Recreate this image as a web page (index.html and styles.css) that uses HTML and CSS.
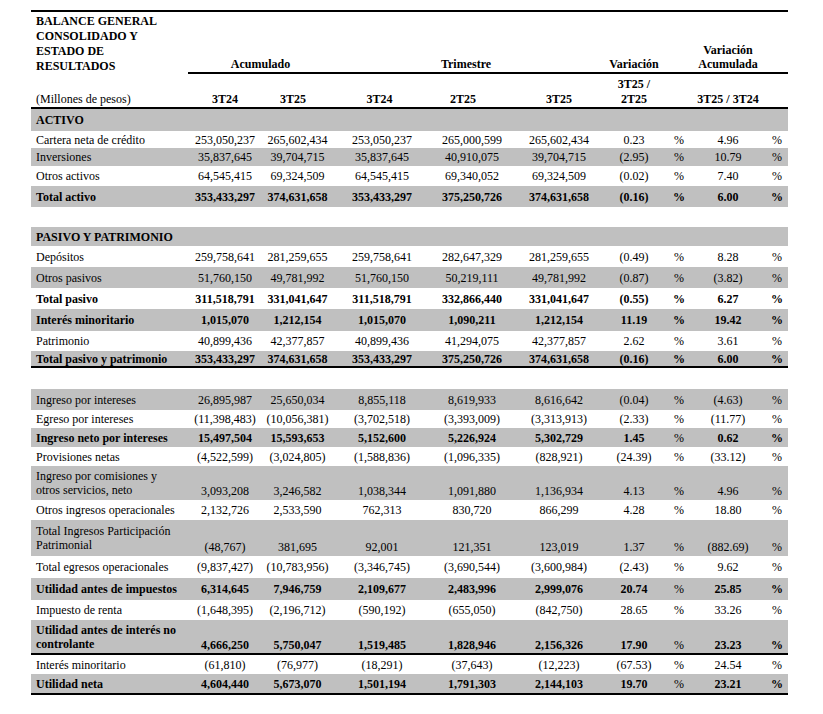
FILE: index.html
```html
<!DOCTYPE html>
<html lang="es">
<head>
<meta charset="utf-8">
<title>Balance General Consolidado y Estado de Resultados</title>
<link rel="stylesheet" href="styles.css">
</head>
<body>
<div class="wrap">
<table class="fin">
<colgroup>
<col class="c-lbl"><col class="c-1"><col class="c-2"><col class="c-3"><col class="c-4"><col class="c-5"><col class="c-6"><col class="c-p1"><col class="c-8"><col class="c-p2">
</colgroup>
<tr class="hd1">
<td class="lbl">BALANCE GENERAL<br>CONSOLIDADO Y<br>ESTADO DE<br>RESULTADOS</td>
<td class="ul" colspan="2">Acumulado</td>
<td class="ul sh6" colspan="3">Trimestre</td>
<td class="ul">Variación</td>
<td class="ul"></td>
<td class="ul va">Variación<br>Acumulada</td>
<td class="ul"></td>
</tr>
<tr class="hd2">
<td class="lbl nb">(Millones de pesos)</td>
<td>3T24</td>
<td class="sh9">3T25</td>
<td class="sh5">3T24</td>
<td class="sh18">2T25</td>
<td>3T25</td>
<td>3T25 /<br>2T25</td>
<td></td>
<td>3T25 / 3T24</td>
<td></td>
</tr>

<tr class="g b h22"><td class="lbl" colspan="10">ACTIVO</td></tr>
<tr class="h17"><td class="lbl">Cartera neta de crédito</td><td>253,050,237</td><td>265,602,434</td><td>253,050,237</td><td>265,000,599</td><td>265,602,434</td><td>0.23</td><td>%</td><td>4.96</td><td class="pc">%</td></tr>
<tr class="g h18"><td class="lbl">Inversiones</td><td>35,837,645</td><td>39,704,715</td><td>35,837,645</td><td>40,910,075</td><td>39,704,715</td><td>(2.95)</td><td>%</td><td>10.79</td><td class="pc">%</td></tr>
<tr class="h20"><td class="lbl">Otros activos</td><td>64,545,415</td><td>69,324,509</td><td>64,545,415</td><td>69,340,052</td><td>69,324,509</td><td>(0.02)</td><td>%</td><td>7.40</td><td class="pc">%</td></tr>
<tr class="g b h21"><td class="lbl">Total activo</td><td>353,433,297</td><td>374,631,658</td><td>353,433,297</td><td>375,250,726</td><td>374,631,658</td><td>(0.16)</td><td>%</td><td>6.00</td><td class="pc">%</td></tr>
<tr class="h20"><td colspan="10"></td></tr>

<tr class="g b h19"><td class="lbl" colspan="10">PASIVO Y PATRIMONIO</td></tr>
<tr class="h21"><td class="lbl">Depósitos</td><td>259,758,641</td><td>281,259,655</td><td>259,758,641</td><td>282,647,329</td><td>281,259,655</td><td>(0.49)</td><td>%</td><td>8.28</td><td class="pc">%</td></tr>
<tr class="g h21"><td class="lbl">Otros pasivos</td><td>51,760,150</td><td>49,781,992</td><td>51,760,150</td><td>50,219,111</td><td>49,781,992</td><td>(0.87)</td><td>%</td><td>(3.82)</td><td class="pc">%</td></tr>
<tr class="b h21"><td class="lbl">Total pasivo</td><td>311,518,791</td><td>331,041,647</td><td>311,518,791</td><td>332,866,440</td><td>331,041,647</td><td>(0.55)</td><td>%</td><td>6.27</td><td class="pc">%</td></tr>
<tr class="g b h22"><td class="lbl">Interés minoritario</td><td>1,015,070</td><td>1,212,154</td><td>1,015,070</td><td>1,090,211</td><td>1,212,154</td><td>11.19</td><td>%</td><td>19.42</td><td class="pc">%</td></tr>
<tr class="h20"><td class="lbl">Patrimonio</td><td>40,899,436</td><td>42,377,857</td><td>40,899,436</td><td>41,294,075</td><td>42,377,857</td><td>2.62</td><td>%</td><td>3.61</td><td class="pc">%</td></tr>
<tr class="g b h17 rule"><td class="lbl">Total pasivo y patrimonio</td><td>353,433,297</td><td>374,631,658</td><td>353,433,297</td><td>375,250,726</td><td>374,631,658</td><td>(0.16)</td><td>%</td><td>6.00</td><td class="pc">%</td></tr>
<tr class="h21"><td colspan="10"></td></tr>

<tr class="g h21"><td class="lbl">Ingreso por intereses</td><td>26,895,987</td><td>25,650,034</td><td>8,855,118</td><td>8,619,933</td><td>8,616,642</td><td>(0.04)</td><td>%</td><td>(4.63)</td><td class="pc">%</td></tr>
<tr class="h18"><td class="lbl">Egreso por intereses</td><td>(11,398,483)</td><td>(10,056,381)</td><td>(3,702,518)</td><td>(3,393,009)</td><td>(3,313,913)</td><td>(2.33)</td><td>%</td><td>(11.77)</td><td class="pc">%</td></tr>
<tr class="g b h19"><td class="lbl">Ingreso neto por intereses</td><td>15,497,504</td><td>15,593,653</td><td>5,152,600</td><td>5,226,924</td><td>5,302,729</td><td>1.45</td><td class="n">%</td><td>0.62</td><td class="pc">%</td></tr>
<tr class="h19"><td class="lbl">Provisiones netas</td><td>(4,522,599)</td><td>(3,024,805)</td><td>(1,588,836)</td><td>(1,096,335)</td><td>(828,921)</td><td>(24.39)</td><td>%</td><td>(33.12)</td><td class="pc">%</td></tr>
<tr class="g ml h34"><td class="lbl">Ingreso por comisiones y<br>otros servicios, neto</td><td>3,093,208</td><td>3,246,582</td><td>1,038,344</td><td>1,091,880</td><td>1,136,934</td><td>4.13</td><td>%</td><td>4.96</td><td class="pc">%</td></tr>
<tr class="h20"><td class="lbl">Otros ingresos operacionales</td><td>2,132,726</td><td>2,533,590</td><td>762,313</td><td>830,720</td><td>866,299</td><td>4.28</td><td>%</td><td>18.80</td><td class="pc">%</td></tr>
<tr class="g ml h36"><td class="lbl">Total Ingresos Participación<br>Patrimonial</td><td>(48,767)</td><td>381,695</td><td>92,001</td><td>121,351</td><td>123,019</td><td>1.37</td><td>%</td><td>(882.69)</td><td class="pc">%</td></tr>
<tr class="h22"><td class="lbl">Total egresos operacionales</td><td>(9,837,427)</td><td>(10,783,956)</td><td>(3,346,745)</td><td>(3,690,544)</td><td>(3,600,984)</td><td>(2.43)</td><td>%</td><td>9.62</td><td class="pc">%</td></tr>
<tr class="g b h22"><td class="lbl">Utilidad antes de impuestos</td><td>6,314,645</td><td>7,946,759</td><td>2,109,677</td><td>2,483,996</td><td>2,999,076</td><td>20.74</td><td class="n">%</td><td>25.85</td><td class="pc">%</td></tr>
<tr class="h20"><td class="lbl">Impuesto de renta</td><td>(1,648,395)</td><td>(2,196,712)</td><td>(590,192)</td><td>(655,050)</td><td>(842,750)</td><td>28.65</td><td>%</td><td>33.26</td><td class="pc">%</td></tr>
<tr class="g b ml h35 rule"><td class="lbl">Utilidad antes de interés no<br>controlante</td><td>4,666,250</td><td>5,750,047</td><td>1,519,485</td><td>1,828,946</td><td>2,156,326</td><td>17.90</td><td class="n">%</td><td>23.23</td><td class="pc">%</td></tr>
<tr class="h19"><td class="lbl">Interés minoritario</td><td>(61,810)</td><td>(76,977)</td><td>(18,291)</td><td>(37,643)</td><td>(12,223)</td><td>(67.53)</td><td>%</td><td>24.54</td><td class="pc">%</td></tr>
<tr class="g b h21 rule"><td class="lbl">Utilidad neta</td><td>4,604,440</td><td>5,673,070</td><td>1,501,194</td><td>1,791,303</td><td>2,144,103</td><td>19.70</td><td class="n">%</td><td>23.21</td><td class="pc">%</td></tr>
</table>
</div>
</body>
</html>
```

FILE: styles.css
```css
html, body {
  margin: 0;
  padding: 0;
  background: #ffffff;
}

body {
  font-family: "Liberation Serif", "Times New Roman", serif;
  font-size: 12px;
  color: #000000;
}

.wrap {
  padding: 10px 0 0 31px;
}

.fin {
  border-collapse: separate;
  border-spacing: 0;
  table-layout: fixed;
  width: 757px;
  border-top: 2px solid #000;
}

.c-lbl { width: 157px; }
.c-1 { width: 74px; }
.c-2 { width: 71px; }
.c-3 { width: 98px; }
.c-4 { width: 82px; }
.c-5 { width: 92px; }
.c-6 { width: 58px; }
.c-p1 { width: 32px; }
.c-8 { width: 66px; }
.c-p2 { width: 27px; }

.fin td {
  padding: 0;
  text-align: center;
  vertical-align: middle;
  line-height: 14px;
  white-space: nowrap;
}

.fin td.lbl {
  text-align: left;
  padding-left: 5px;
}

.fin td.pc {
  padding-left: 5px;
}

/* header */
.hd1 { height: 62px; }
.hd1 td {
  font-weight: bold;
  vertical-align: bottom;
  line-height: 15px;
}
.hd1 td.ul {
  border-bottom: 2px solid #000;
}
.hd1 td.va {
  line-height: 14px;
  padding-bottom: 1px;
}
.hd1 td.sh6 { padding-right: 6px; }

.hd2 { height: 35px; }
.hd2 td {
  font-weight: bold;
  vertical-align: bottom;
  line-height: 15px;
  border-bottom: 2px solid #000;
}
.hd2 td.nb { font-weight: normal; }
.hd2 td.sh9 { padding-right: 9px; }
.hd2 td.sh5 { padding-right: 5px; }
.hd2 td.sh18 { padding-right: 18px; }

/* body rows */
.g td { background: #c0c0c0; }
.b td { font-weight: bold; }
.b td.n { font-weight: normal; }

.rule td { border-bottom: 2px solid #000; }

.ml td {
  vertical-align: bottom;
  padding-bottom: 2px;
}
.ml td.lbl {
  vertical-align: middle;
  padding-bottom: 0;
}
.rule.ml td { padding-bottom: 1px; }
.rule.ml td.lbl { padding-bottom: 0; }

.h17 { height: 17px; }
.h18 { height: 18px; }
.h19 { height: 19px; }
.h20 { height: 20px; }
.h21 { height: 21px; }
.h22 { height: 22px; }
.h34 { height: 34px; }
.h35 { height: 35px; }
.h36 { height: 36px; }
```
